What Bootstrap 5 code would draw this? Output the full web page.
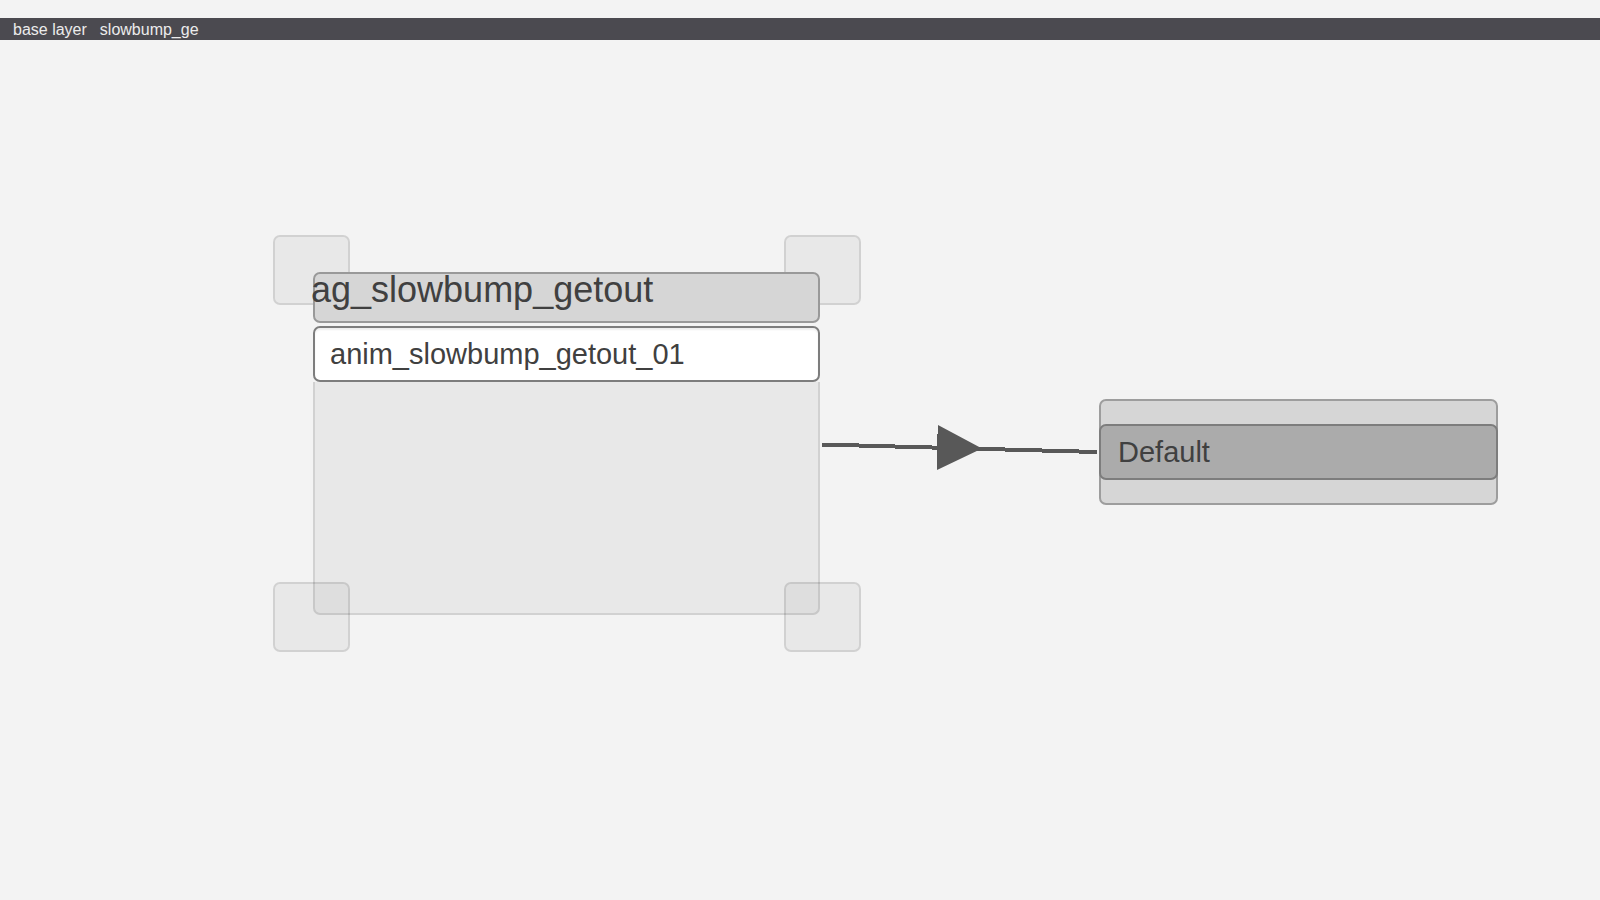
<!DOCTYPE html>
<html lang="en">
<head>
<meta charset="utf-8">
<meta name="viewport" content="width=device-width, initial-scale=1">
<title>slowbump_ge</title>
<link href="https://cdn.jsdelivr.net/npm/bootstrap@5.3.0/dist/css/bootstrap.min.css" rel="stylesheet">
<style>
  body { background: #f3f3f3; color: #404040; font-family: "Liberation Sans", Arial, sans-serif; }
  .path-bar { margin-top: 18px; height: 22px; padding-left: 13px; gap: 13px; background: #4b4a50; font-size: 16px; line-height: 24px; }
  .path-bar a { color: #ececec; }

  /* Free canvas: nodes and links sit at their graph coordinates */
  .graph-node, .graph-link, .grip { position: absolute; }
  .group-node { left: 313px; top: 272px; width: 507px; height: 343px; }
  .state-node { left: 1099px; top: 399px; width: 399px; height: 106px; background: #d6d6d6; border: 2px solid #9d9d9d; border-radius: 7px; }
  .group-head { height: 51px; margin-bottom: 3px; background: #d6d6d6; border: 2px solid #999; border-radius: 7px; font-size: 36px; line-height: 32px; }
  .group-head h1 { margin: 0 0 0 -4px; font: inherit; }
  .node-row { height: 56px; padding: 0 15px; border: 2px solid #7d7d7d; border-radius: 7px; font-size: 29px; line-height: 52px; }
  .clip-row { background: #fff; box-shadow: inset 0 2px 2px #eee; }
  .state-row { margin: 0 -2px; padding-left: 17px; background: #ababab; }
  .group-area { background: #e8e8e8; border: 2px solid #d1d1d1; border-top: 0; border-radius: 0 0 7px 7px; }
  .grip { width: 77px; height: 70px; background: rgba(0, 0, 0, .045); border: 2px solid rgba(0, 0, 0, .1); border-radius: 7px; }
  .grip-start { left: -40px; }
  .grip-end { right: -41px; }
  .grip-top { top: -37px; z-index: -1; }
  .grip-bottom { bottom: -37px; }
  .graph-link { left: 822px; top: 422px; }
</style>
</head>
<body class="min-vh-100 position-relative overflow-hidden">
<nav class="path-bar d-flex" aria-label="Graph path">
  <a class="text-decoration-none" href="#base">base layer</a>
  <a class="text-decoration-none" href="#graph">slowbump_ge</a>
</nav>
<main id="graph">
  <section class="graph-node group-node d-flex flex-column">
    <div class="grip grip-start grip-top"></div>
    <div class="grip grip-end grip-top"></div>
    <header class="group-head flex-shrink-0 text-nowrap"><h1>ag_slowbump_getout</h1></header>
    <div class="node-row clip-row flex-shrink-0 text-nowrap">anim_slowbump_getout_01</div>
    <div class="group-area flex-grow-1"></div>
    <div class="grip grip-start grip-bottom"></div>
    <div class="grip grip-end grip-bottom"></div>
  </section>
  <svg class="graph-link" width="275" height="52" viewBox="0 0 275 52" fill="#585858" aria-hidden="true">
    <path d="M0 20.5 275 28V32L0 24.5Z" shape-rendering="crispEdges"/>
    <path d="M116 3 160 26.500 115 48V12H116Z"/>
  </svg>
  <section class="graph-node state-node d-flex flex-column justify-content-center">
    <div class="node-row state-row text-nowrap">Default</div>
  </section>
</main>
<script src="https://cdn.jsdelivr.net/npm/bootstrap@5.3.0/dist/js/bootstrap.bundle.min.js"></script>
</body>
</html>
